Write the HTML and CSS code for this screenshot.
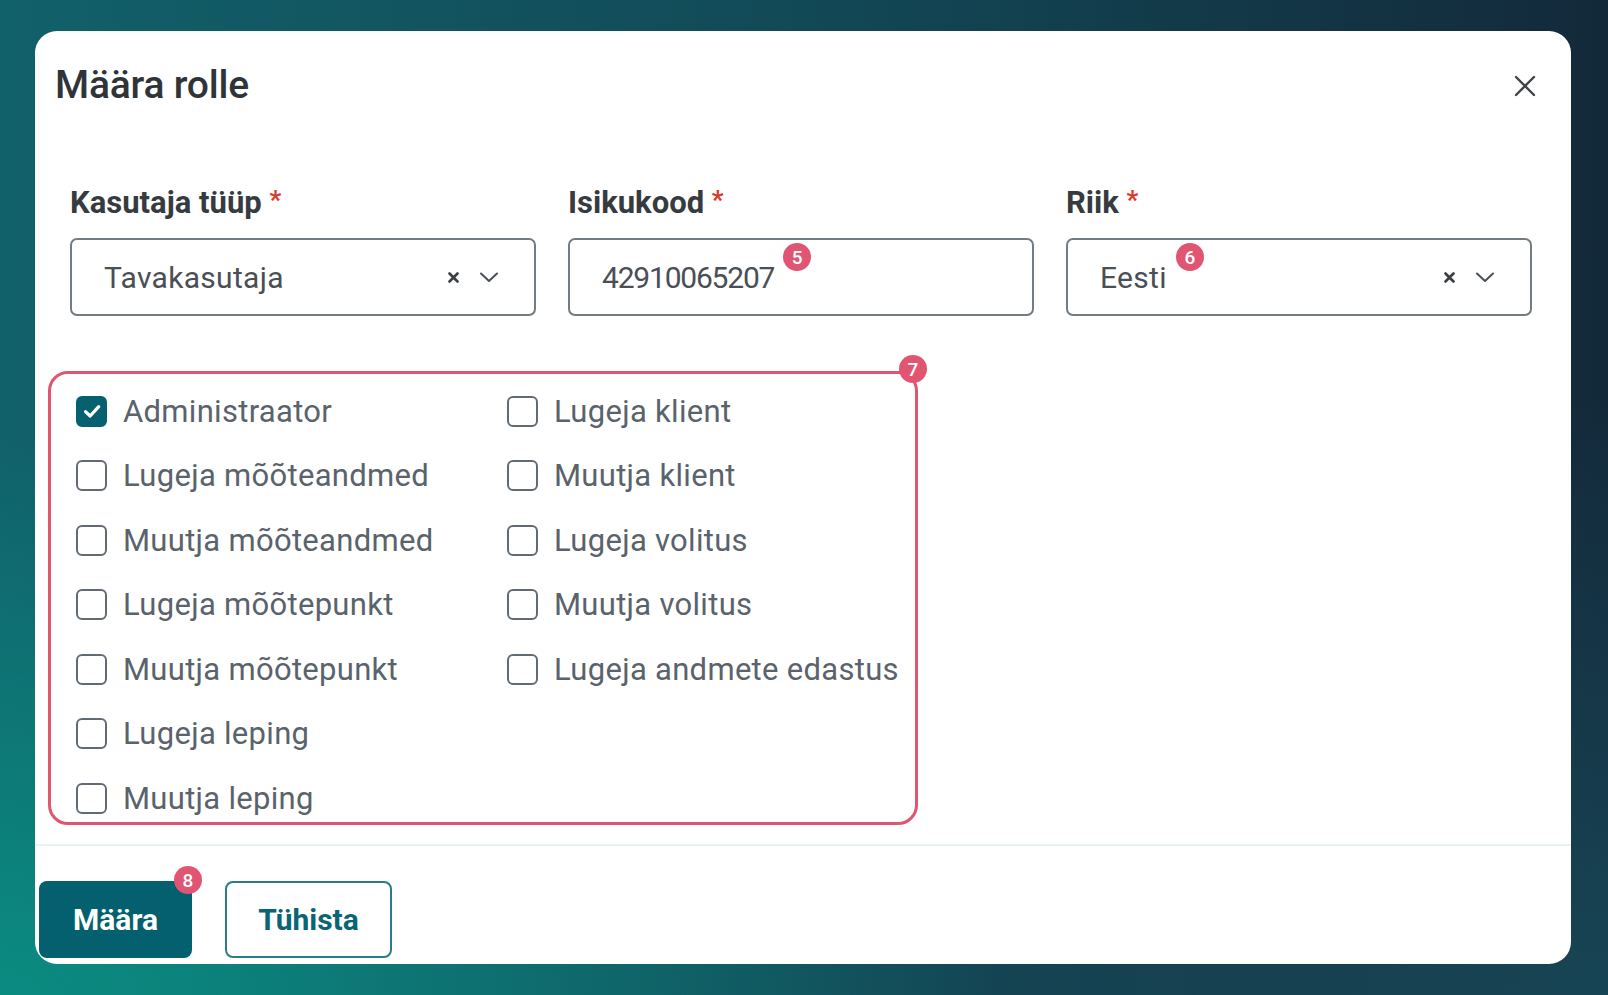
FILE: index.html
```html
<!DOCTYPE html>
<html lang="et">
<head>
<meta charset="utf-8">
<title>Määra rolle</title>
<link rel="stylesheet" href="styles.css">
</head>
<body>
<div class="card">
  <header class="head">
    <h1 class="title">Määra rolle</h1>
    <button class="close" aria-label="Sulge">
      <svg width="22" height="22" viewBox="0 0 22 22"><path d="M2 2L20 20M20 2L2 20" stroke="#3f4448" stroke-width="2.4" stroke-linecap="round"/></svg>
    </button>
  </header>

  <section class="fields">
    <div class="field">
      <div class="label">Kasutaja tüüp <span class="req">*</span></div>
      <div class="input">
        <span class="value">Tavakasutaja</span>
        <span class="icons">
          <svg class="clear" width="11" height="11" viewBox="0 0 11 11"><path d="M1.5 1.5L9.5 9.5M9.5 1.5L1.5 9.5" stroke="#3a3f44" stroke-width="2.6" stroke-linecap="round"/></svg>
          <svg class="chev" width="20" height="11" viewBox="0 0 20 11"><path d="M2 1.5L10 9L18 1.5" fill="none" stroke="#4a5056" stroke-width="2" stroke-linecap="round" stroke-linejoin="round"/></svg>
        </span>
      </div>
    </div>
    <div class="field">
      <div class="label">Isikukood <span class="req">*</span></div>
      <div class="input">
        <span class="value value-num">42910065207</span><span class="badge badge-inline">5</span>
      </div>
    </div>
    <div class="field">
      <div class="label">Riik <span class="req">*</span></div>
      <div class="input">
        <span class="value">Eesti</span><span class="badge badge-inline">6</span>
        <span class="icons">
          <svg class="clear" width="11" height="11" viewBox="0 0 11 11"><path d="M1.5 1.5L9.5 9.5M9.5 1.5L1.5 9.5" stroke="#3a3f44" stroke-width="2.6" stroke-linecap="round"/></svg>
          <svg class="chev" width="20" height="11" viewBox="0 0 20 11"><path d="M2 1.5L10 9L18 1.5" fill="none" stroke="#4a5056" stroke-width="2" stroke-linecap="round" stroke-linejoin="round"/></svg>
        </span>
      </div>
    </div>
  </section>

  <div class="roles">
    <span class="badge badge-roles">7</span>
    <label class="role"><span class="box checked"><svg width="26" height="26" viewBox="0 0 24 24"><path d="M6 12.6L10.3 16.6L18.2 8" fill="none" stroke="#fff" stroke-width="3" stroke-linecap="round" stroke-linejoin="round"/></svg></span>Administraator</label>
    <label class="role"><span class="box"></span>Lugeja mõõteandmed</label>
    <label class="role"><span class="box"></span>Muutja mõõteandmed</label>
    <label class="role"><span class="box"></span>Lugeja mõõtepunkt</label>
    <label class="role"><span class="box"></span>Muutja mõõtepunkt</label>
    <label class="role"><span class="box"></span>Lugeja leping</label>
    <label class="role"><span class="box"></span>Muutja leping</label>
    <label class="role"><span class="box"></span>Lugeja klient</label>
    <label class="role"><span class="box"></span>Muutja klient</label>
    <label class="role"><span class="box"></span>Lugeja volitus</label>
    <label class="role"><span class="box"></span>Muutja volitus</label>
    <label class="role"><span class="box"></span>Lugeja andmete edastus</label>
  </div>

  <div class="divider"></div>

  <footer class="foot">
    <button class="btn primary">Määra<span class="badge badge-btn">8</span></button>
    <button class="btn outline">Tühista</button>
  </footer>
</div>
</body>
</html>
```

FILE: styles.css
```css
* { box-sizing: border-box; }

html, body {
  margin: 0;
  height: 100%;
}

body {
  font-family: Roboto, "Noto Sans", sans-serif;
  background:
    radial-gradient(90% 80% at 0% 100%, rgba(10, 142, 130, 0.95) 0%, rgba(10, 142, 130, 0) 70%),
    radial-gradient(60% 60% at 100% 100%, rgba(24, 72, 88, 0.9) 0%, rgba(24, 72, 88, 0) 100%),
    linear-gradient(to right, #11616a 0%, #124957 50%, #13293a 100%);
  padding: 31px 37px 31px 35px;
  overflow: hidden;
}

.card {
  background: #fff;
  border-radius: 22px;
  width: 1536px;
  display: flex;
  flex-direction: column;
}

.head {
  display: flex;
  align-items: center;
  justify-content: space-between;
  padding: 31px 35px 0 20px;
}

.title {
  margin: 0;
  font-size: 39px;
  line-height: 47px;
  font-weight: 500;
  color: #2f3438;
  letter-spacing: -0.2px;
}

.close {
  border: 0;
  background: none;
  padding: 0;
  width: 22px;
  height: 22px;
  display: flex;
}

.fields {
  display: grid;
  grid-template-columns: repeat(3, 466px);
  column-gap: 32px;
  padding: 0 38px 0 35px;
  margin-top: 75px;
}

.label {
  font-size: 31px;
  line-height: 38px;
  height: 38px;
  font-weight: 700;
  color: #363b40;
  margin-bottom: 16px;
}

.req {
  color: #d93a2e;
  font-size: 26px;
  line-height: 0;
  vertical-align: 4px;
}

.input {
  height: 78px;
  border: 2px solid #737b83;
  border-radius: 7px;
  display: flex;
  align-items: center;
  padding: 0 35px 0 32px;
}

.value {
  font-size: 30px;
  color: #4a4f55;
  letter-spacing: 0.3px;
}

.value-num {
  letter-spacing: -1.2px;
}

.icons {
  margin-left: auto;
  display: flex;
  align-items: center;
  gap: 20px;
}

.badge {
  display: inline-flex;
  align-items: center;
  justify-content: center;
  width: 28px;
  height: 28px;
  border-radius: 50%;
  background: #e05672;
  color: #fff;
  font-size: 19px;
  font-weight: 500;
  line-height: 1;
}

.badge-inline {
  position: relative;
  top: -20px;
  margin-left: 9px;
}

.roles {
  position: relative;
  margin: 55px 0 0 13px;
  width: 870px;
  border: 3px solid #e0566f;
  border-radius: 20px;
  padding: 13px 0 0 25px;
  display: grid;
  grid-template-columns: 431px 1fr;
  grid-template-rows: repeat(7, 48px);
  grid-auto-flow: column;
  row-gap: 16.5px;
}

.badge-roles {
  position: absolute;
  top: -19px;
  right: -12px;
}

.role {
  display: flex;
  align-items: center;
  gap: 16px;
  font-size: 31px;
  color: #5a636c;
  letter-spacing: 0.3px;
}

.box {
  width: 31px;
  height: 31px;
  flex: none;
  border: 2px solid #626b74;
  border-radius: 6px;
  display: flex;
  align-items: center;
  justify-content: center;
}

.box.checked {
  background: #05606f;
  border-color: #05606f;
}

.divider {
  height: 2px;
  background: #e9f3f0;
  margin-top: 19px;
}

.foot {
  display: flex;
  gap: 33px;
  padding: 35px 0 6px 4px;
}

.btn {
  position: relative;
  height: 77px;
  border-radius: 8px;
  font-family: Roboto, "Noto Sans", sans-serif;
  font-size: 30px;
  font-weight: 700;
  cursor: pointer;
}

.primary {
  width: 153px;
  background: #04606f;
  border: 0;
  color: #fff;
}

.outline {
  width: 167px;
  background: #fff;
  border: 2px solid #2c7c88;
  color: #0a6474;
}

.badge-btn {
  position: absolute;
  top: -15px;
  right: -10px;
}
```
